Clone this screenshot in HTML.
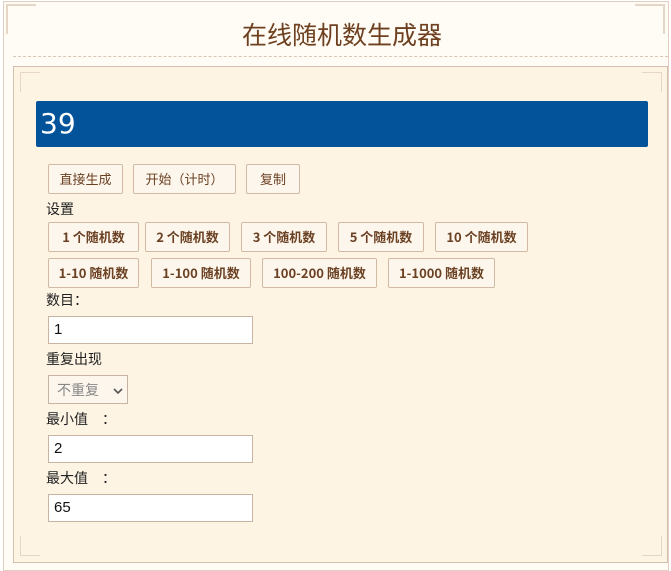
<!DOCTYPE html>
<html><head><meta charset="utf-8"><style>
*{margin:0;padding:0;box-sizing:border-box}
body{width:671px;height:564px;background:#fff;font-family:"Liberation Sans","Noto Sans CJK SC",sans-serif;position:relative;overflow:hidden}
.outer{position:absolute;left:3px;top:1px;width:666px;height:570px;border:1px solid #e0cfc0;background:#fffcf6}
.title{position:absolute;left:0;width:684px;top:16px;text-align:center;font-size:25px;color:#6e4020;font-family:"Noto Sans CJK SC",sans-serif}
.dash{position:absolute;left:13px;width:655px;top:56px;border-top:1px dashed #d9c7b6}
.panel{position:absolute;left:13px;top:66px;width:655px;height:497px;border:1px solid #d5bfae;background:#fdf4e4}
.blue{position:absolute;left:36px;top:101px;width:612px;height:46px;background:#02539a;border-radius:2px;color:#fff;font-size:28px;padding:6px 0 0 4px;font-family:"DejaVu Sans",sans-serif}
.b{position:absolute;height:30px;border:1px solid #d1b9a4;border-radius:2px;background:#fdf6ed;color:#6b4123;font-size:13px;line-height:28px;text-align:center;font-family:"Noto Sans CJK SC",sans-serif}
.s{font-weight:bold;font-size:13px}
.lab{position:absolute;left:46px;font-size:14px;color:#222;font-family:"Noto Sans CJK SC",sans-serif}
.in{position:absolute;left:48px;width:205px;height:28px;border:1px solid #c8b4a3;background:#fff;font-size:15px;padding:4px 0 0 5px;color:#111}
.sel{position:absolute;left:48px;top:375px;width:80px;height:29px;border:1px solid #c8b4a3;background:#fdf6ed;color:#888;font-size:14px;padding:4px 0 0 8px;font-family:"Noto Sans CJK SC",sans-serif}
.corner{position:absolute;width:30px;height:30px;border:0 solid #e5d6c6}
</style></head><body>
<div class="outer"></div>
<div class="corner" style="left:6px;top:4px;border-left-width:2px;border-top-width:2px"></div>
<div class="corner" style="right:6px;top:4px;border-right-width:2px;border-top-width:2px"></div>
<div class="title">在线随机数生成器</div>
<div class="dash"></div>
<div class="panel"></div>
<div class="corner" style="left:20px;top:72px;width:20px;height:20px;border-left-width:1px;border-top-width:1px"></div>
<div class="corner" style="left:642px;top:72px;width:20px;height:20px;border-right-width:1px;border-top-width:1px"></div>
<div class="corner" style="left:20px;top:536px;width:20px;height:20px;border-left-width:1px;border-bottom-width:1px"></div>
<div class="corner" style="left:642px;top:536px;width:20px;height:20px;border-right-width:1px;border-bottom-width:1px"></div>
<div class="blue">39</div>
<div class="b" style="left:48px;top:164px;width:75px">直接生成</div>
<div class="b" style="left:133px;top:164px;width:103px">开始（计时）</div>
<div class="b" style="left:246px;top:164px;width:54px">复制</div>
<div class="lab" style="top:199px">设置</div>
<div class="b s" style="left:48px;top:222px;width:91px">1 个随机数</div>
<div class="b s" style="left:145px;top:222px;width:85px">2 个随机数</div>
<div class="b s" style="left:241px;top:222px;width:86px">3 个随机数</div>
<div class="b s" style="left:338px;top:222px;width:86px">5 个随机数</div>
<div class="b s" style="left:435px;top:222px;width:93px">10 个随机数</div>
<div class="b s" style="left:48px;top:258px;width:91px">1-10 随机数</div>
<div class="b s" style="left:151px;top:258px;width:100px">1-100 随机数</div>
<div class="b s" style="left:262px;top:258px;width:115px">100-200 随机数</div>
<div class="b s" style="left:388px;top:258px;width:107px">1-1000 随机数</div>
<div class="lab" style="top:290px">数目：</div>
<div class="in" style="top:316px">1</div>
<div class="lab" style="top:349px">重复出现</div>
<div class="sel">不重复<svg width="10" height="8" style="position:absolute;left:64px;top:11px"><path d="M1 2 L5 6 L9 2" stroke="#555" stroke-width="1.6" fill="none"/></svg></div>
<div class="lab" style="top:409px">最小值　：</div>
<div class="in" style="top:435px">2</div>
<div class="lab" style="top:468px">最大值　：</div>
<div class="in" style="top:494px">65</div>
</body></html>
